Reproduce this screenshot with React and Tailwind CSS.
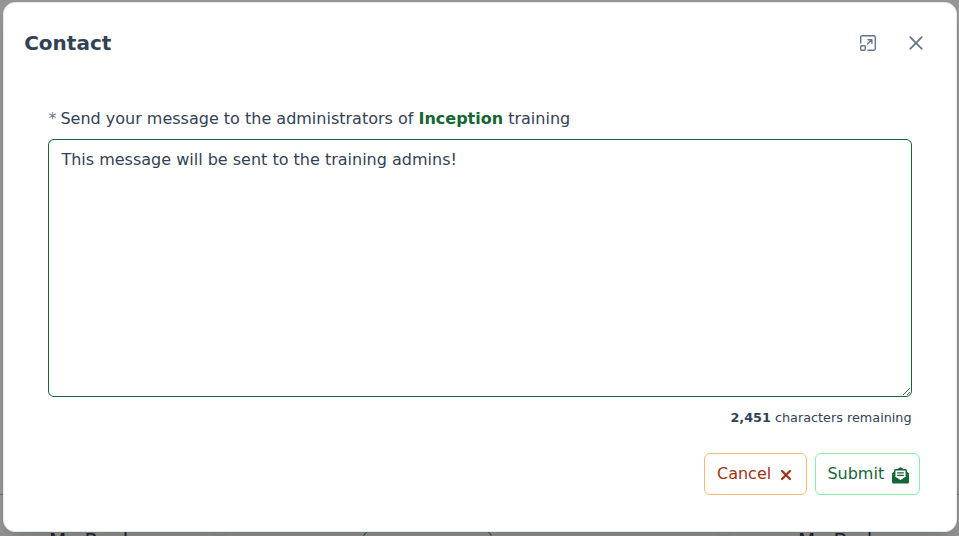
import React from "react";
import { FaXmark } from "react-icons/fa6";

function MaximizeIcon() {
  return (
    <svg className="size-4" viewBox="0 0 16 16" fill="none" stroke="currentColor" strokeWidth="1.400" strokeLinecap="round" strokeLinejoin="round">
      <path d="M.7 8V2.400C.7 1.200 1.200.7 2.400.7h11.200c1.200 0 1.700.5 1.700 1.700v11.200c0 1.200-.5 1.700-1.700 1.700H8" />
      <rect x="0.7" y="10.7" width="4.6" height="4.6" rx="1" />
      <path d="M8 4.700h3.900v3.900M11.800 4.800 7.500 9.100" />
    </svg>
  );
}

function CloseIcon() {
  return (
    <svg className="size-4" viewBox="0 0 16 16" fill="none" stroke="currentColor" strokeWidth="1.700" strokeLinecap="round">
      <path d="M2.200 2.200l11.600 11.600M13.800 2.200 2.200 13.800" />
    </svg>
  );
}

function EnvelopeIcon() {
  return (
    <svg className="mt-[2px] ml-2 size-[17px]" viewBox="0 0 17 16" fill="currentColor">
      <path d="M0 6.500 8.500 12 17 6.500v8c0 .9-.6 1.500-1.500 1.500h-14C.6 16 0 15.400 0 14.500z" />
      <path d="M2.700 8.800V2.300h11.600v6.500L8.500 12.500z" fill="white" />
      <path d="M2.700 9V3.200c0-.6.3-.9.9-.9h9.800c.6 0 .9.3.9.9V9M5.800 2.100 8.500.600l2.700 1.500" fill="none" stroke="currentColor" strokeWidth="1.500" />
      <path d="M5.200 4.700h6.600v1.200H5.200zM5.200 7.300h6.600v1.200H5.200z" />
      <path d="M0 5.700 2.500 3.800v4L0 6.700zM17 5.700l-2.500-1.900v4L17 6.700z" />
    </svg>
  );
}

function Backdrop() {
  return (
    <div className="absolute inset-0 flex flex-col bg-[#959595] text-[20px] leading-6 text-[#1f2733]">
      <div className="h-[494px] shrink-0" />
      <div className="h-px shrink-0 bg-[#6b6d70]" />
      <div className="flex grow bg-[#959595]">
        <div className="h-[41px] w-[213px] shrink-0 overflow-hidden pt-[33px] pl-[49px]">My Rank</div>
        <div className="h-[41px] w-[14px] shrink-0 bg-[#909396]" />
        <div className="flex h-[41px] w-[491px] shrink-0 justify-center overflow-hidden pt-[35px]">
          <div className="mr-[91px] h-8 w-[129px] rounded-lg border border-[#245c3c]" />
        </div>
        <div className="h-[41px] w-[14px] shrink-0 bg-[#909396]" />
        <div className="h-[41px] w-[227px] shrink-0 overflow-hidden pt-[33px] pl-[66px]">My Badges</div>
      </div>
    </div>
  );
}

export default function App() {
  return (
    <div className="relative h-[536px] w-[959px] overflow-hidden font-['DejaVu_Sans',sans-serif] text-base text-[#334155]">
      <Backdrop />
      <div className="relative pt-[2px] pl-[3px]">
        <section role="dialog" className="h-[530px] w-[954px] rounded-xl border border-[#e2e8f0] bg-white shadow-xl">
          <header className="flex h-[80px] items-center justify-between pr-8 pl-[20.2px]">
            <h1 className="text-[20px] leading-6 font-bold">Contact</h1>
            <div className="flex gap-8 text-[#64748b]">
              <button aria-label="Maximize"><MaximizeIcon /></button>
              <button aria-label="Close"><CloseIcon /></button>
            </div>
          </header>
          <main className="px-11 pt-6">
            <label className="block h-8 pl-[0.4px] leading-6 whitespace-pre">
              <span className="text-[#64748b]">*</span><span className="ml-1">Send your message to the administrators of </span><span className="font-bold text-[#166534]">Inception</span> training
            </label>
            <textarea
              className="block h-[258px] w-[864px] resize rounded-md border border-[#166534] bg-white py-2 pr-3 pl-[12.4px] leading-6 outline-none"
              defaultValue="This message will be sent to the training admins!"
            />
            <p className="mt-[11px] pr-[0.4px] text-right text-[12.8px] leading-5"><b>2,451</b> characters remaining</p>
          </main>
          <footer className="mt-[25px] flex justify-end gap-2 pr-9">
            <button className="flex h-[42px] w-[103px] items-center rounded-md border border-[#fdba74] pl-3 text-[#9a3412]">
              <span className="leading-6">Cancel</span>
              <FaXmark className="mt-[2px] ml-[7px] size-4" stroke="currentColor" strokeWidth="8" />
            </button>
            <button className="flex h-[42px] w-[105px] items-center rounded-md border border-[#86efac] pl-[11.4px] text-[#166534]">
              <span className="leading-6">Submit</span>
              <EnvelopeIcon />
            </button>
          </footer>
        </section>
      </div>
    </div>
  );
}
